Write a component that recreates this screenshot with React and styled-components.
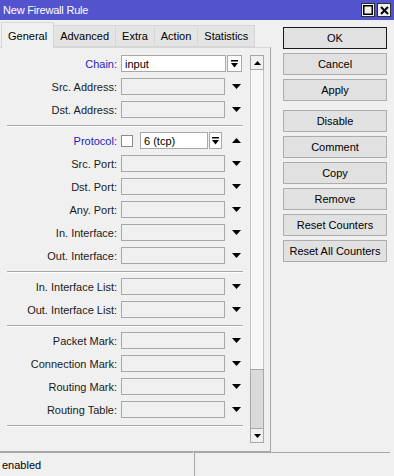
import styled, { createGlobalStyle } from "styled-components";

const GlobalStyle = createGlobalStyle`
  html, body {
    margin: 0;
    padding: 0;
    background: #f0f0f0;
  }

  body {
    color: #000;
    font-size: 11px;
    font-family: "Liberation Sans", Arial, sans-serif;
  }
`;

const Window = styled.div`
  width: 394px;
  height: 476px;
  display: flex;
  overflow: hidden;
  flex-direction: column;
  background: #f0f0f0;
`;

const TitleBar = styled.div`
  height: 20px;
  display: flex;
  color: #fff;
  padding-left: 3px;
  align-items: center;
  background: #5353cd;
  justify-content: space-between;
`;

const TitleText = styled.span`
  font-size: 11px;
  letter-spacing: -0.2px;
`;

const TitleButtons = styled.div`
  gap: 2px;
  display: flex;
  margin-right: 3px;
`;

const TitleButton = styled.div`
  width: 12px;
  height: 12px;
  display: flex;
  align-items: center;
  background: #f0f0f0;
  justify-content: center;
  border: 1px solid #303030;
`;

const Body = styled.div`
  flex: 1;
  display: flex;
`;

const LeftPane = styled.div`
  width: 271px;
  display: flex;
  flex-direction: column;
`;

const TabStrip = styled.div`
  height: 27px;
  display: flex;
  padding-left: 1px;
  align-items: flex-end;
`;

const Tab = styled.div`
  z-index: ${(p) => (p.$active ? 1 : 0)};
  height: ${(p) => (p.$active ? "25px" : "20px")};
  display: flex;
  padding: 0 ${(p) => p.$pad}px;
  align-items: center;
  margin-bottom: ${(p) => (p.$active ? "-1px" : "0")};
  background: ${(p) => (p.$active ? "#f0f0f0" : "#e4e4e4")};
  border: 1px solid #d6d6d6;
  border-bottom: ${(p) => (p.$active ? "none" : "1px solid #d6d6d6")};
  margin-left: ${(p) => (p.$active ? "0" : "-1px")};
  font-size: 11px;
`;

const Panel = styled.div`
  flex: 1;
  display: flex;
  border-top: 1px solid #d6d6d6;
  border-right: 1px solid #a8a8a8;
  border-bottom: 1px solid #a8a8a8;
`;

const Form = styled.div`
  width: 249px;
  display: flex;
  padding-top: 7px;
  flex-direction: column;
`;

const Section = styled.div`
  gap: 6px;
  display: flex;
  flex-direction: column;
`;

const Separator = styled.div`
  width: 236px;
  margin: 7px 0 5px 7px;
  border-top: 1px solid #a8a8a8;
  border-bottom: 1px solid #fff;
`;

const Row = styled.div`
  height: 17px;
  display: flex;
  align-items: center;
`;

const Label = styled.label`
  width: 117px;
  margin-right: 4px;
  text-align: right;
  white-space: nowrap;
  color: ${(p) => (p.$accent ? "#1f1fb8" : "#1a1a1a")};
`;

const Field = styled.div`
  height: 15px;
  display: flex;
  padding: 0 3px;
  align-items: center;
  box-sizing: content-box;
  width: ${(p) => p.$width - 8}px;
  border: 1px solid #a8a8a8;
  background: ${(p) => (p.$filled ? "#fff" : "#f0f0f0")};
`;

const ComboButton = styled.div`
  width: ${(p) => p.$width}px;
  height: 15px;
  display: flex;
  margin-left: 1px;
  background: #fff;
  align-items: center;
  justify-content: center;
  border: 1px solid #a8a8a8;
`;

const ArrowCell = styled.div`
  width: 9px;
  display: flex;
  margin-left: ${(p) => p.$offset}px;
  justify-content: center;
`;

const CheckBox = styled.div`
  width: 10px;
  height: 10px;
  margin-right: 7px;
  background: #fff;
  border: 1px solid #8a8a8a;
`;

const Scrollbar = styled.div`
  width: 14px;
  display: flex;
  margin: 7px 0 8px 1px;
  flex-direction: column;
`;

const ScrollButton = styled.div`
  height: 13px;
  display: flex;
  align-items: center;
  background: #f0f0f0;
  justify-content: center;
  border: 1px solid #a8a8a8;
`;

const Track = styled.div`
  flex: 1;
  display: flex;
  background: #f7f7f7;
  flex-direction: column;
  border-left: 1px solid #c4c4c4;
  border-right: 1px solid #c4c4c4;
`;

const Thumb = styled.div`
  height: 58px;
  margin: 0 -1px;
  margin-top: auto;
  background: #dadada;
  border: 1px solid #a8a8a8;
  border-bottom: none;
`;

const RightPane = styled.div`
  gap: 4px;
  display: flex;
  padding: 7px 0 0 12px;
  flex-direction: column;
`;

const Button = styled.button`
  width: 104px;
  height: 22px;
  padding: 0;
  color: #000;
  font-size: 11px;
  font-family: inherit;
  background: #e1e1e1;
  margin-top: ${(p) => (p.$spaced ? "5px" : "0")};
  border: 1px solid ${(p) => (p.$default ? "#1a1a1a" : "#adadad")};
`;

const StatusBar = styled.div`
  height: 24px;
  display: flex;
`;

const StatusCell = styled.div`
  display: flex;
  padding-left: 2px;
  align-items: center;
  width: ${(p) => (p.$width ? `${p.$width}px` : "auto")};
  flex: ${(p) => (p.$width ? "none" : "1")};
  border-top: 1px solid #a8a8a8;
  border-left: ${(p) => (p.$divider ? "1px solid #a8a8a8" : "none")};
  margin-left: ${(p) => (p.$divider ? "1px" : "0")};
  margin-right: ${(p) => (p.$divider ? "4px" : "0")};
`;

const DownArrow = () => (
  <svg width="9" height="5" viewBox="0 0 9 5">
    <polygon points="0,0 9,0 4.5,5" fill="#000" />
  </svg>
);

const UpArrow = () => (
  <svg width="9" height="5" viewBox="0 0 9 5">
    <polygon points="0,5 9,5 4.5,0" fill="#000" />
  </svg>
);

const ComboIcon = () => (
  <svg width="9" height="8" viewBox="0 0 9 8">
    <rect x="1" y="0" width="7" height="1.5" fill="#000" />
    <polygon points="1,3 8,3 4.5,7.5" fill="#000" />
  </svg>
);

const SmallArrow = ({ up }) => (
  <svg width="7" height="4" viewBox="0 0 7 4">
    <polygon points={up ? "0,4 7,4 3.5,0" : "0,0 7,0 3.5,4"} fill="#000" />
  </svg>
);

const tabs = [
  { name: "General", pad: 6 },
  { name: "Advanced", pad: 6 },
  { name: "Extra", pad: 6 },
  { name: "Action", pad: 6 },
  { name: "Statistics", pad: 6 },
];

const sections = [
  ["Src. Port:", "Dst. Port:", "Any. Port:", "In. Interface:", "Out. Interface:"],
  ["In. Interface List:", "Out. Interface List:"],
  ["Packet Mark:", "Connection Mark:", "Routing Mark:", "Routing Table:"],
];

const buttons = [
  { label: "OK", default: true },
  { label: "Cancel" },
  { label: "Apply" },
  { label: "Disable", spaced: true },
  { label: "Comment" },
  { label: "Copy" },
  { label: "Remove" },
  { label: "Reset Counters" },
  { label: "Reset All Counters" },
];

function EmptyRow({ label }) {
  return (
    <Row>
      <Label>{label}</Label>
      <Field $width={104} />
      <ArrowCell $offset={7}>
        <DownArrow />
      </ArrowCell>
    </Row>
  );
}

export default function App() {
  return (
    <Window>
      <GlobalStyle />
      <TitleBar>
        <TitleText>New Firewall Rule</TitleText>
        <TitleButtons>
          <TitleButton>
            <svg width="10" height="10" viewBox="0 0 10 10">
              <rect x="0.75" y="0.75" width="8.5" height="8.5" fill="none" stroke="#000" strokeWidth="1.5" />
            </svg>
          </TitleButton>
          <TitleButton>
            <svg width="9" height="9" viewBox="0 0 9 9">
              <path d="M1 1 L8 8 M8 1 L1 8" stroke="#000" strokeWidth="2" />
            </svg>
          </TitleButton>
        </TitleButtons>
      </TitleBar>
      <Body>
        <LeftPane>
          <TabStrip>
            {tabs.map((t, i) => (
              <Tab key={t.name} $active={i === 0} $pad={t.pad}>
                {t.name}
              </Tab>
            ))}
          </TabStrip>
          <Panel>
            <Form>
              <Section>
                <Row>
                  <Label $accent>Chain:</Label>
                  <Field $width={105} $filled>
                    input
                  </Field>
                  <ComboButton $width={13}>
                    <ComboIcon />
                  </ComboButton>
                </Row>
                <EmptyRow label="Src. Address:" />
                <EmptyRow label="Dst. Address:" />
              </Section>
              <Separator />
              <Section>
                <Row>
                  <Label $accent>Protocol:</Label>
                  <CheckBox />
                  <Field $width={68} $filled>
                    6 (tcp)
                  </Field>
                  <ComboButton $width={11}>
                    <ComboIcon />
                  </ComboButton>
                  <ArrowCell $offset={10}>
                    <UpArrow />
                  </ArrowCell>
                </Row>
                {sections[0].map((l) => (
                  <EmptyRow key={l} label={l} />
                ))}
              </Section>
              <Separator />
              <Section>
                {sections[1].map((l) => (
                  <EmptyRow key={l} label={l} />
                ))}
              </Section>
              <Separator />
              <Section>
                {sections[2].map((l) => (
                  <EmptyRow key={l} label={l} />
                ))}
              </Section>
              <Separator />
            </Form>
            <Scrollbar>
              <ScrollButton>
                <SmallArrow up />
              </ScrollButton>
              <Track>
                <Thumb />
              </Track>
              <ScrollButton>
                <SmallArrow />
              </ScrollButton>
            </Scrollbar>
          </Panel>
        </LeftPane>
        <RightPane>
          {buttons.map((b) => (
            <Button key={b.label} $default={b.default} $spaced={b.spaced}>
              {b.label}
            </Button>
          ))}
        </RightPane>
      </Body>
      <StatusBar>
        <StatusCell $width={191}>enabled</StatusCell>
        <StatusCell $divider />
      </StatusBar>
    </Window>
  );
}
